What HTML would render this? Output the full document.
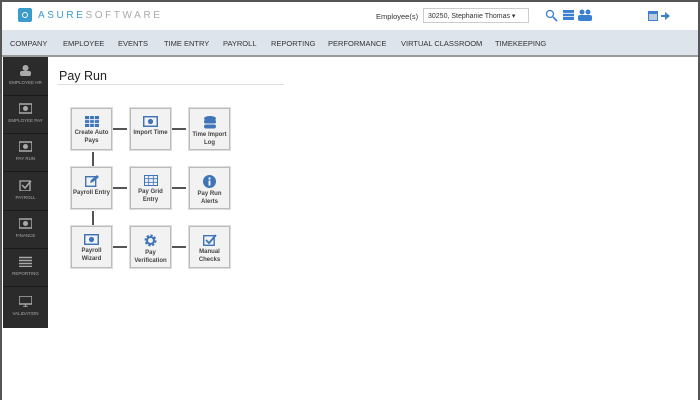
<!DOCTYPE html>
<html><head><style>
*{margin:0;padding:0;box-sizing:border-box}
body{width:700px;height:400px;overflow:hidden;background:#fff;font-family:"Liberation Sans",sans-serif;position:relative}
.frame{position:absolute;left:0;top:0;width:700px;height:400px;border:2px solid #555;border-bottom:none}
.hdr{position:absolute;left:2px;top:2px;width:696px;height:28px;background:#fff}
.logo{position:absolute;left:16px;top:6px;width:14px;height:14px;background:#3a9cc9;border-radius:2px}
.logo:after{content:"";position:absolute;left:4px;top:4px;width:4px;height:4px;border:1.5px solid #fff;border-radius:50%}
.brand{position:absolute;left:36px;top:8px;font-size:10px;letter-spacing:2.6px;color:#3a9cc9}
.brand b{font-weight:normal;color:#aaa}
.emp{position:absolute;left:374px;top:10px;font-size:7.5px;color:#333}
.sel{position:absolute;left:421px;top:6px;width:106px;height:15px;border:1px solid #ccc;font-size:7px;padding:3px 4px;color:#333;white-space:nowrap;overflow:hidden}
.nav{position:absolute;left:2px;top:30px;width:696px;height:27px;background:#dde4ec;border-bottom:2px solid #999;font-size:7.5px;color:#333;white-space:nowrap}
.nav span{position:absolute;top:9px}
.side{position:absolute;left:3px;top:57px;width:45px;height:271px;background:#2b2b2b}
.si{position:absolute;left:0;width:45px;height:39px;border-bottom:1px solid #1a1a1a;text-align:center;color:#aaa;font-size:4.5px}
.si .ic{display:block;margin:8px auto 4px;width:13px;height:11px}
.title{position:absolute;left:59px;top:69px;font-size:12.5px;color:#222}
.uline{position:absolute;left:58px;top:84px;width:226px;height:1px;background:#ddd}
.box{position:absolute;width:41px;height:42px;background:#f2f2f2;border:1px solid #bbb;box-shadow:0 0 0 1px #ddd;text-align:center;font-size:6px;font-weight:bold;color:#444;line-height:8px}
.box svg{display:block;margin:7px auto 2px}
.h{position:absolute;height:2px;width:14px;background:#555}
.v{position:absolute;width:2px;height:14px;background:#555;left:92px}
</style></head><body>
<div class="frame"></div>
<div class="hdr">
<div class="logo"></div>
<div class="brand">ASURE<b>SOFTWARE</b></div>
<div class="emp">Employee(s)</div>
<div class="sel">30250, Stephanie Thomas ▾</div>
<svg style="position:absolute;left:543px;top:7px" width="13" height="13"><circle cx="5" cy="5" r="3.5" fill="none" stroke="#3a7fd0" stroke-width="1.3"/><line x1="8" y1="8" x2="12" y2="12" stroke="#3a7fd0" stroke-width="1.6"/></svg>
<svg style="position:absolute;left:561px;top:8px" width="11" height="10"><rect width="11" height="10" fill="#3a7fd0"/><path d="M0 3.3h11M0 6.6h11" stroke="#fff" stroke-width=".8"/></svg>
<svg style="position:absolute;left:576px;top:7px" width="14" height="12"><circle cx="4" cy="3" r="2.5" fill="#3a7fd0"/><circle cx="10" cy="3" r="2.5" fill="#3a7fd0"/><rect x="0" y="6" width="14" height="6" rx="2" fill="#3a7fd0"/></svg>
<svg style="position:absolute;left:646px;top:8px" width="22" height="11"><rect x="0" y="1" width="10" height="10" fill="#3a7fd0"/><rect x="1" y="4" width="8" height="6" fill="#bcd"/><path d="M13 5h4V2l5 4-5 4V7h-4z" fill="#3a7fd0"/></svg>
</div>
<div class="nav">
<span style="left:8px">COMPANY</span><span style="left:61px">EMPLOYEE</span><span style="left:116px">EVENTS</span><span style="left:162px">TIME ENTRY</span><span style="left:221px">PAYROLL</span><span style="left:269px">REPORTING</span><span style="left:326px">PERFORMANCE</span><span style="left:399px">VIRTUAL CLASSROOM</span><span style="left:493px">TIMEKEEPING</span>
</div>
<div class="side">
<div class="si" style="top:0"><svg class="ic"><circle cx="6.5" cy="3" r="3" fill="#aaa"/><rect x="1" y="6" width="11" height="5" rx="2" fill="#aaa"/></svg>EMPLOYEE HR</div>
<div class="si" style="top:38px"><svg class="ic"><rect x="0" y="1" width="13" height="9" fill="none" stroke="#aaa" stroke-width="1.5"/><circle cx="6.5" cy="5.5" r="2.5" fill="#aaa"/></svg>EMPLOYEE PAY</div>
<div class="si" style="top:76px"><svg class="ic"><rect x="0" y="1" width="13" height="9" fill="none" stroke="#aaa" stroke-width="1.5"/><circle cx="6.5" cy="5.5" r="2.5" fill="#aaa"/></svg>PAY RUN</div>
<div class="si" style="top:115px"><svg class="ic"><rect x="1" y="1" width="10" height="10" fill="none" stroke="#aaa" stroke-width="1.3"/><path d="M3 5l3 3 6-7" fill="none" stroke="#aaa" stroke-width="1.5"/></svg>PAYROLL</div>
<div class="si" style="top:153px"><svg class="ic"><rect x="0" y="1" width="13" height="9" fill="none" stroke="#aaa" stroke-width="1.5"/><circle cx="6.5" cy="5.5" r="2.5" fill="#aaa"/></svg>FINANCE</div>
<div class="si" style="top:191px"><svg class="ic"><path d="M0 1.5h13M0 4.5h13M0 7.5h13M0 10.5h13" stroke="#aaa" stroke-width="1.6"/></svg>REPORTING</div>
<div class="si" style="top:231px;border:none"><svg class="ic"><rect x="0" y="0" width="13" height="8" fill="none" stroke="#aaa" stroke-width="1.5"/><path d="M4 11h5M6.5 8v3" stroke="#aaa" stroke-width="1.3"/></svg>VALIDATION</div>
</div>
<div class="title">Pay Run</div><div class="uline"></div>

<div class="box" style="left:71px;top:108px"><svg width="14" height="11"><rect width="14" height="11" fill="#3f74b8"/><path d="M0 3.7h14M0 7.3h14M4.7 0v11M9.3 0v11" stroke="#fff" stroke-width=".8"/></svg>Create Auto Pays</div>
<div class="box" style="left:130px;top:108px"><svg width="15" height="11"><rect x=".7" y=".7" width="13.6" height="9.6" fill="none" stroke="#3f74b8" stroke-width="1.5"/><circle cx="7.5" cy="5.5" r="2.6" fill="#3f74b8"/></svg>Import Time</div>
<div class="box" style="left:189px;top:108px"><svg width="12" height="13"><ellipse cx="6" cy="2.5" rx="6" ry="2.5" fill="#3f74b8"/><rect y="4" width="12" height="3.5" rx="1.5" fill="#3f74b8"/><rect y="8.5" width="12" height="4" rx="2" fill="#3f74b8"/></svg>Time Import Log</div>
<div class="h" style="left:113px;top:128px"></div><div class="h" style="left:172px;top:128px"></div>
<div class="v" style="top:152px"></div>
<div class="box" style="left:71px;top:167px"><svg width="14" height="12"><rect x=".7" y="1.7" width="10" height="9.6" fill="none" stroke="#3f74b8" stroke-width="1.4"/><path d="M5 8l1-3 6-5 2 2-6 5z" fill="#3f74b8"/></svg>Payroll Entry</div>
<div class="box" style="left:130px;top:167px"><svg width="14" height="11"><rect x=".5" y=".5" width="13" height="10" fill="none" stroke="#3f74b8"/><path d="M0 3.7h14M0 7.3h14M4.7 0v11M9.3 0v11" stroke="#3f74b8" stroke-width=".8"/></svg>Pay Grid Entry</div>
<div class="box" style="left:189px;top:167px"><svg width="13" height="13"><circle cx="6.5" cy="6.5" r="6.5" fill="#3f74b8"/><rect x="5.6" y="5.5" width="1.8" height="5" fill="#fff"/><circle cx="6.5" cy="3.5" r="1.1" fill="#fff"/></svg>Pay Run Alerts</div>
<div class="h" style="left:113px;top:187px"></div><div class="h" style="left:172px;top:187px"></div>
<div class="v" style="top:211px"></div>
<div class="box" style="left:71px;top:226px"><svg width="15" height="11"><rect x=".7" y=".7" width="13.6" height="9.6" fill="none" stroke="#3f74b8" stroke-width="1.5"/><circle cx="7.5" cy="5.5" r="2.6" fill="#3f74b8"/></svg>Payroll Wizard</div>
<div class="box" style="left:130px;top:226px"><svg width="13" height="13"><circle cx="6.5" cy="6.5" r="4.5" fill="none" stroke="#3f74b8" stroke-width="3" stroke-dasharray="2 1.5"/><circle cx="6.5" cy="6.5" r="3.5" fill="none" stroke="#3f74b8" stroke-width="2"/></svg>Pay Verification</div>
<div class="box" style="left:189px;top:226px"><svg width="14" height="12"><rect x=".7" y="1.7" width="10.5" height="9.6" fill="none" stroke="#3f74b8" stroke-width="1.4"/><path d="M3 6l3 3 7-8" fill="none" stroke="#3f74b8" stroke-width="1.8"/></svg>Manual Checks</div>
<div class="h" style="left:113px;top:246px"></div><div class="h" style="left:172px;top:246px"></div>
</body></html>
